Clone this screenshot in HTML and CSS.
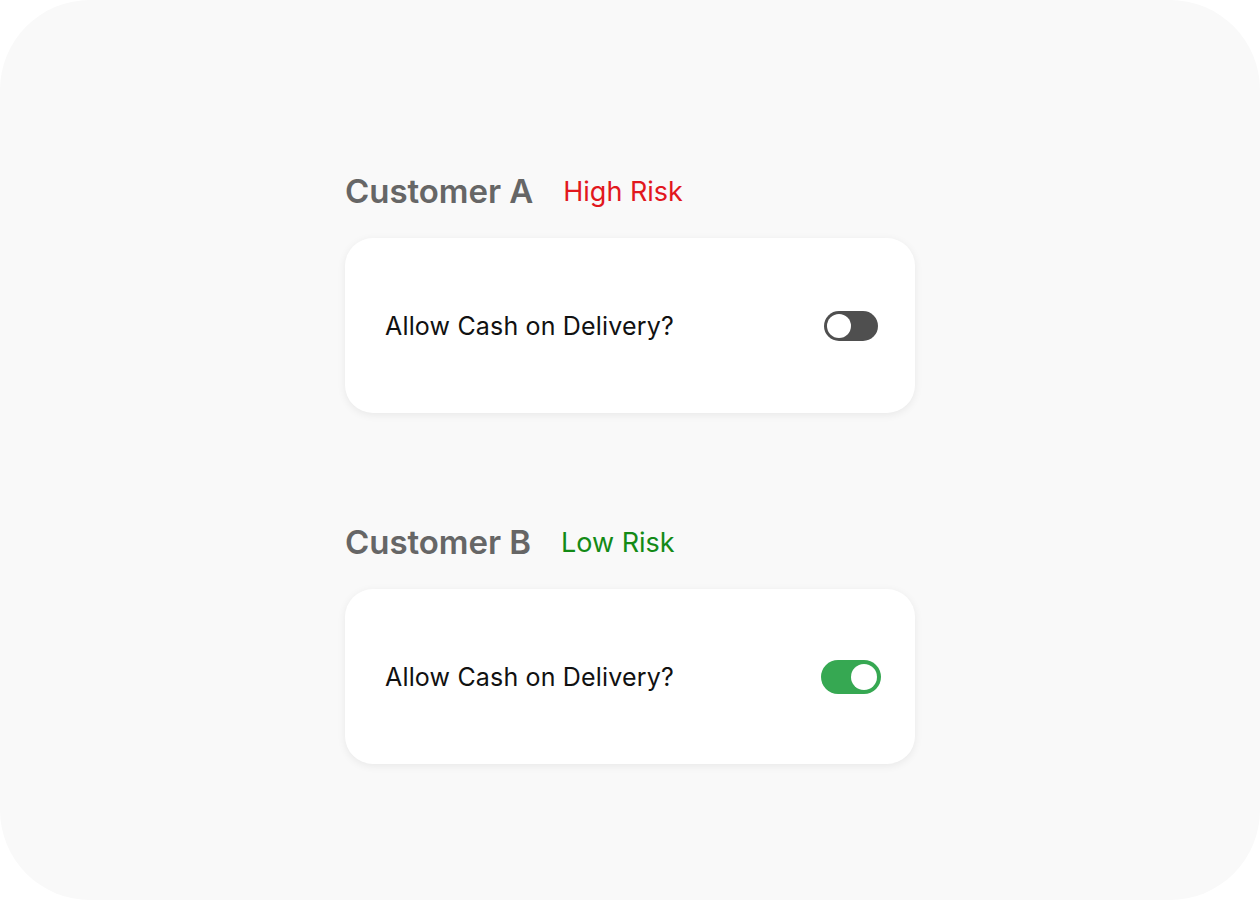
FILE: index.html
```html
<!DOCTYPE html>
<html lang="en">
<head>
    <meta charset="UTF-8">
    <meta name="viewport" content="width=device-width, initial-scale=1.0">
    <title>Cash on Delivery Risk</title>
    <link rel="stylesheet" href="styles.css">
</head>
<body>
    <div class="panel">
        <section class="customer">
            <div class="customer-head">
                <h2>Customer A</h2>
                <span class="risk high">High Risk</span>
            </div>
            <div class="setting-card">
                <span class="setting-label">Allow Cash on Delivery?</span>
                <span class="toggle off"><span class="knob"></span></span>
            </div>
        </section>

        <section class="customer">
            <div class="customer-head">
                <h2>Customer B</h2>
                <span class="risk low">Low Risk</span>
            </div>
            <div class="setting-card">
                <span class="setting-label">Allow Cash on Delivery?</span>
                <span class="toggle on"><span class="knob"></span></span>
            </div>
        </section>
    </div>
</body>
</html>
```

FILE: styles.css
```css
body {
    margin: 0;
    background: #ffffff;
    font-family: Inter, "Noto Sans", sans-serif;
}
.panel {
    width: 1260px;
    height: 900px;
    box-sizing: border-box;
    background: #f9f9f9;
    border-radius: 90px;
    padding-top: 171px;
    display: flex;
    flex-direction: column;
    align-items: center;
    gap: 109px;
}
.customer {
    width: 570px;
    display: flex;
    flex-direction: column;
    gap: 27px;
}
.customer-head {
    height: 40px;
    display: flex;
    align-items: center;
    gap: 30px;
}
.customer-head h2 {
    margin: 0;
    font-size: 33px;
    font-weight: 600;
    color: #666666;
    letter-spacing: -0.05px;
}
.risk {
    font-size: 27px;
    font-weight: 400;
}
.high { color: #e2171d; }
.low { color: #138a16; }
.setting-card {
    height: 175px;
    box-sizing: border-box;
    background: #ffffff;
    border-radius: 28px;
    box-shadow: 0 2px 8px rgba(0, 0, 0, 0.07);
    padding: 0 34px 0 40px;
    display: flex;
    align-items: center;
    justify-content: space-between;
}
.setting-label {
    font-size: 25px;
    color: #111111;
    letter-spacing: 0.17px;
}
.toggle {
    display: flex;
    align-items: center;
    box-sizing: border-box;
    border-radius: 20px;
}
.toggle.off {
    width: 54px;
    height: 30px;
    background: #4f4f4f;
    padding: 0 3px;
    margin-right: 3px;
}
.toggle.on {
    width: 60px;
    height: 34px;
    background: #36a852;
    padding: 0 4px;
    justify-content: flex-end;
}
.knob {
    background: #ffffff;
    border-radius: 50%;
}
.off .knob {
    width: 24px;
    height: 24px;
}
.on .knob {
    width: 26px;
    height: 26px;
}
```
